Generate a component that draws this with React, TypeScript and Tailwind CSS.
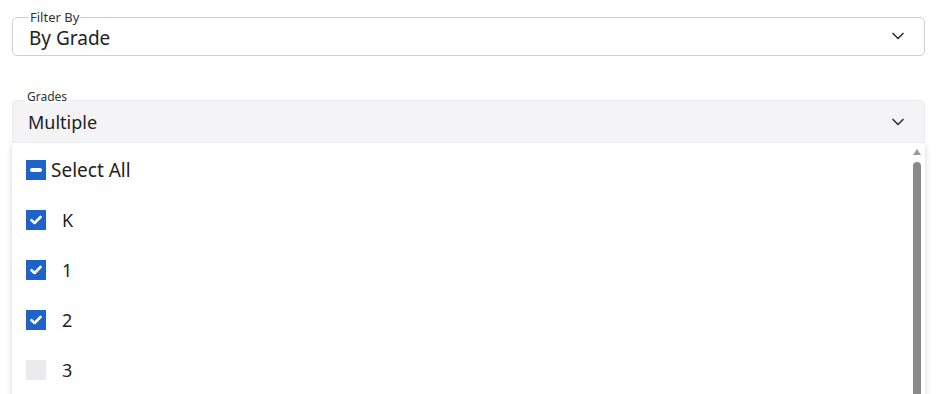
import { ChevronDown } from "lucide-react";

const grades = [
  { label: "K", checked: true },
  { label: "1", checked: true },
  { label: "2", checked: true },
  { label: "3", checked: false },
];

function Check({ checked }: { checked: boolean }) {
  if (!checked) return <div className="w-5 h-5 bg-[#ebebed]" />;
  return (
    <div className="w-5 h-5 bg-[#1f63c9] flex items-center justify-center">
      <svg width="12" height="10" viewBox="0 0 12 10">
        <path d="M1.5 5.2 L4.6 8 L10.5 2" stroke="white" strokeWidth="2.6" fill="none" strokeLinecap="round" strokeLinejoin="round" />
      </svg>
    </div>
  );
}

export default function App() {
  return (
    <div className="h-[394px] w-full overflow-hidden bg-white text-[#222] font-['Noto_Sans',sans-serif]">
      <fieldset className="mx-3 mt-[10px] border border-[#cfd0d4] rounded-[5px] pl-4 pr-4 pb-[5px]">
        <legend className="text-[13px] leading-[14px] px-[1px] text-[#333]">Filter By</legend>
        <div className="mt-[2px] flex items-center justify-between">
          <span className="text-[19px] leading-6">By Grade</span>
          <ChevronDown size={20} strokeWidth={2} className="text-[#333] -mt-1" />
        </div>
      </fieldset>

      <div className="relative mx-3 mt-[44px]">
        <div className="h-[43px] bg-[#f4f4f6] border border-[#ebebee] rounded-t-[5px] flex items-center justify-between pl-[15px] pr-4 pt-[1px]">
          <span className="text-[18px] leading-6">Multiple</span>
          <ChevronDown size={20} strokeWidth={2} className="text-[#333]" />
        </div>
        <span className="absolute left-[13px] top-[-9px] px-[2px] bg-white text-[12px] leading-[12px] text-[#333]">Grades</span>
      </div>

      <div className="mx-3 flex bg-white shadow-[0_2px_6px_rgba(0,0,0,0.18)] h-[260px]">
        <div className="flex-1 pt-[2px] pl-[14px]">
          <div className="h-[50px] flex items-center gap-[5px]">
            <div className="w-5 h-5 bg-[#1f63c9] flex items-center justify-center">
              <div className="w-3 h-[4px] rounded-full bg-white" />
            </div>
            <span className="text-[19px]">Select All</span>
          </div>
          {grades.map((g) => (
            <div key={g.label} className="h-[50px] flex items-center gap-[16px]">
              <Check checked={g.checked} />
              <span className="text-[18px]">{g.label}</span>
            </div>
          ))}
        </div>
        <div className="w-2 mr-1 flex flex-col items-center pt-[6px]">
          <svg width="8" height="6" viewBox="0 0 8 6">
            <path d="M4 0 L8 6 L0 6 Z" fill="#9a9a9a" />
          </svg>
          <div className="mt-[7px] w-2 flex-1 bg-[#8a8a8a] rounded-t-full" />
        </div>
      </div>
    </div>
  );
}
